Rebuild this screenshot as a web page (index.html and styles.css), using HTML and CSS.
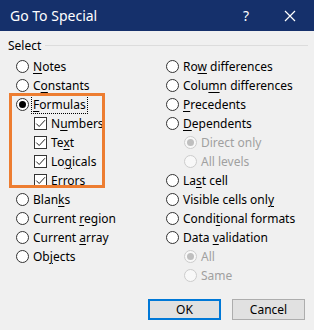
FILE: index.html
```html
<!DOCTYPE html>
<html>
<head>
<meta charset="utf-8">
<link rel="stylesheet" href="styles.css">
</head>
<body>
<div class="dialog">
  <div class="titlebar">
    <span class="title">Go To Special</span>
    <span class="help">?</span>
    <svg class="close" width="12" height="12" viewBox="0 0 12 12"><path d="M1 1 L11 11 M11 1 L1 11" stroke="#fff" stroke-width="1.2" fill="none"/></svg>
  </div>
  <div class="content">
    <div class="group-label"><span>Select</span><div class="rule"></div></div>
    <div class="options">
      <div class="col left">
        <div class="opt"><span class="radio"></span><span><u>N</u>otes</span></div>
        <div class="opt"><span class="radio"></span><span>C<u>o</u>nstants</span></div>
        <div class="opt"><span class="radio checked"></span><span class="focus"><u>F</u>ormulas</span></div>
        <div class="opt sub"><span class="check"><svg width="11" height="11" viewBox="0 0 11 11"><path d="M1.3 5.6 L4.2 8.5 L10 2.2" stroke="#222" stroke-width="1" fill="none"/></svg></span><span>N<u>u</u>mbers</span></div>
        <div class="opt sub"><span class="check"><svg width="11" height="11" viewBox="0 0 11 11"><path d="M1.3 5.6 L4.2 8.5 L10 2.2" stroke="#222" stroke-width="1" fill="none"/></svg></span><span>Te<u>x</u>t</span></div>
        <div class="opt sub"><span class="check"><svg width="11" height="11" viewBox="0 0 11 11"><path d="M1.3 5.6 L4.2 8.5 L10 2.2" stroke="#222" stroke-width="1" fill="none"/></svg></span><span>Lo<u>g</u>icals</span></div>
        <div class="opt sub"><span class="check"><svg width="11" height="11" viewBox="0 0 11 11"><path d="M1.3 5.6 L4.2 8.5 L10 2.2" stroke="#222" stroke-width="1" fill="none"/></svg></span><span><u>E</u>rrors</span></div>
        <div class="opt"><span class="radio"></span><span>Blan<u>k</u>s</span></div>
        <div class="opt"><span class="radio"></span><span>Current <u>r</u>egion</span></div>
        <div class="opt"><span class="radio"></span><span>Current <u>a</u>rray</span></div>
        <div class="opt"><span class="radio"></span><span>Ob<u>j</u>ects</span></div>
        <div class="highlight"></div>
      </div>
      <div class="col right">
        <div class="opt"><span class="radio"></span><span>Ro<u>w</u> differences</span></div>
        <div class="opt"><span class="radio"></span><span>Colu<u>m</u>n differences</span></div>
        <div class="opt"><span class="radio"></span><span><u>P</u>recedents</span></div>
        <div class="opt"><span class="radio"></span><span><u>D</u>ependents</span></div>
        <div class="opt sub disabled"><span class="radio checked"></span><span>Direct only</span></div>
        <div class="opt sub disabled"><span class="radio"></span><span>All levels</span></div>
        <div class="opt"><span class="radio"></span><span>La<u>s</u>t cell</span></div>
        <div class="opt"><span class="radio"></span><span>Visible cells onl<u>y</u></span></div>
        <div class="opt"><span class="radio"></span><span>Condi<u>t</u>ional formats</span></div>
        <div class="opt"><span class="radio"></span><span>Data <u>v</u>alidation</span></div>
        <div class="opt sub disabled"><span class="radio checked"></span><span>All</span></div>
        <div class="opt sub disabled"><span class="radio"></span><span>Same</span></div>
      </div>
    </div>
    <div class="buttons">
      <button class="btn default">OK</button>
      <button class="btn">Cancel</button>
    </div>
  </div>
</div>
</body>
</html>
```
FILE: styles.css
```css
* { box-sizing: border-box; }
html, body { margin: 0; padding: 0; }
body {
  width: 314px;
  height: 330px;
  overflow: hidden;
  background: #f0f0f0;
  font-family: "Noto Sans", "Open Sans", sans-serif;
  font-size: 12px;
  color: #000;
}
.dialog { width: 314px; height: 330px; background: #f0f0f0; }
.titlebar {
  height: 31px;
  background: #15306b;
  color: #fff;
  display: flex;
  align-items: center;
  padding-left: 10px;
}
.title { font-size: 14px; flex: 1; }
.help { font-size: 14px; margin-right: 35px; }
.close { margin-right: 18px; }
.content { padding: 6px 0 0 0; }
.group-label {
  display: flex;
  align-items: center;
  height: 16px;
  padding-left: 8px;
  padding-right: 6px;
}
.group-label span { margin-right: 4px; }
.rule { flex: 1; height: 1px; background: #dcdcdc; }
.options {
  display: grid;
  grid-template-columns: 150px 1fr;
  padding-left: 16px;
  margin-top: 4px;
}
.col { position: relative; }
.opt {
  height: 19px;
  display: flex;
  align-items: center;
  white-space: nowrap;
}
.opt.sub { padding-left: 18px; }
.radio {
  width: 13px;
  height: 13px;
  border: 1px solid #333;
  border-radius: 50%;
  background: #fff;
  margin-right: 4px;
  flex: none;
  display: flex;
  align-items: center;
  justify-content: center;
}
.radio.checked::after {
  content: "";
  width: 7px;
  height: 7px;
  border-radius: 50%;
  background: #000;
}
.disabled { color: #a0a0a0; }
.disabled .radio { border-color: #cccccc; background: #f8f8f8; }
.disabled .radio.checked::after { background: #bfbfbf; }
.check {
  width: 13px;
  height: 13px;
  border: 1px solid #333;
  background: #fff;
  margin-right: 4px;
  flex: none;
  display: flex;
  align-items: center;
  justify-content: center;
}
.focus { outline: 1px dotted #000; outline-offset: 0; padding: 0 1px; margin-left: -1px; }
u { text-decoration-thickness: 1px; text-underline-offset: 2px; }
.highlight {
  position: absolute;
  left: -7px;
  top: 36px;
  width: 96px;
  height: 95px;
  border: 3px solid #ed7d31;
  pointer-events: none;
}
.buttons {
  display: flex;
  justify-content: flex-end;
  gap: 11px;
  padding-right: 9px;
  margin-top: 14px;
}
.btn {
  width: 73px;
  height: 21px;
  background: #e1e1e1;
  border: 1px solid #adadad;
  font-family: inherit;
  font-size: 12px;
  color: #000;
  padding: 0;
}
.btn.default { border: 2px solid #0078d7; }
```
